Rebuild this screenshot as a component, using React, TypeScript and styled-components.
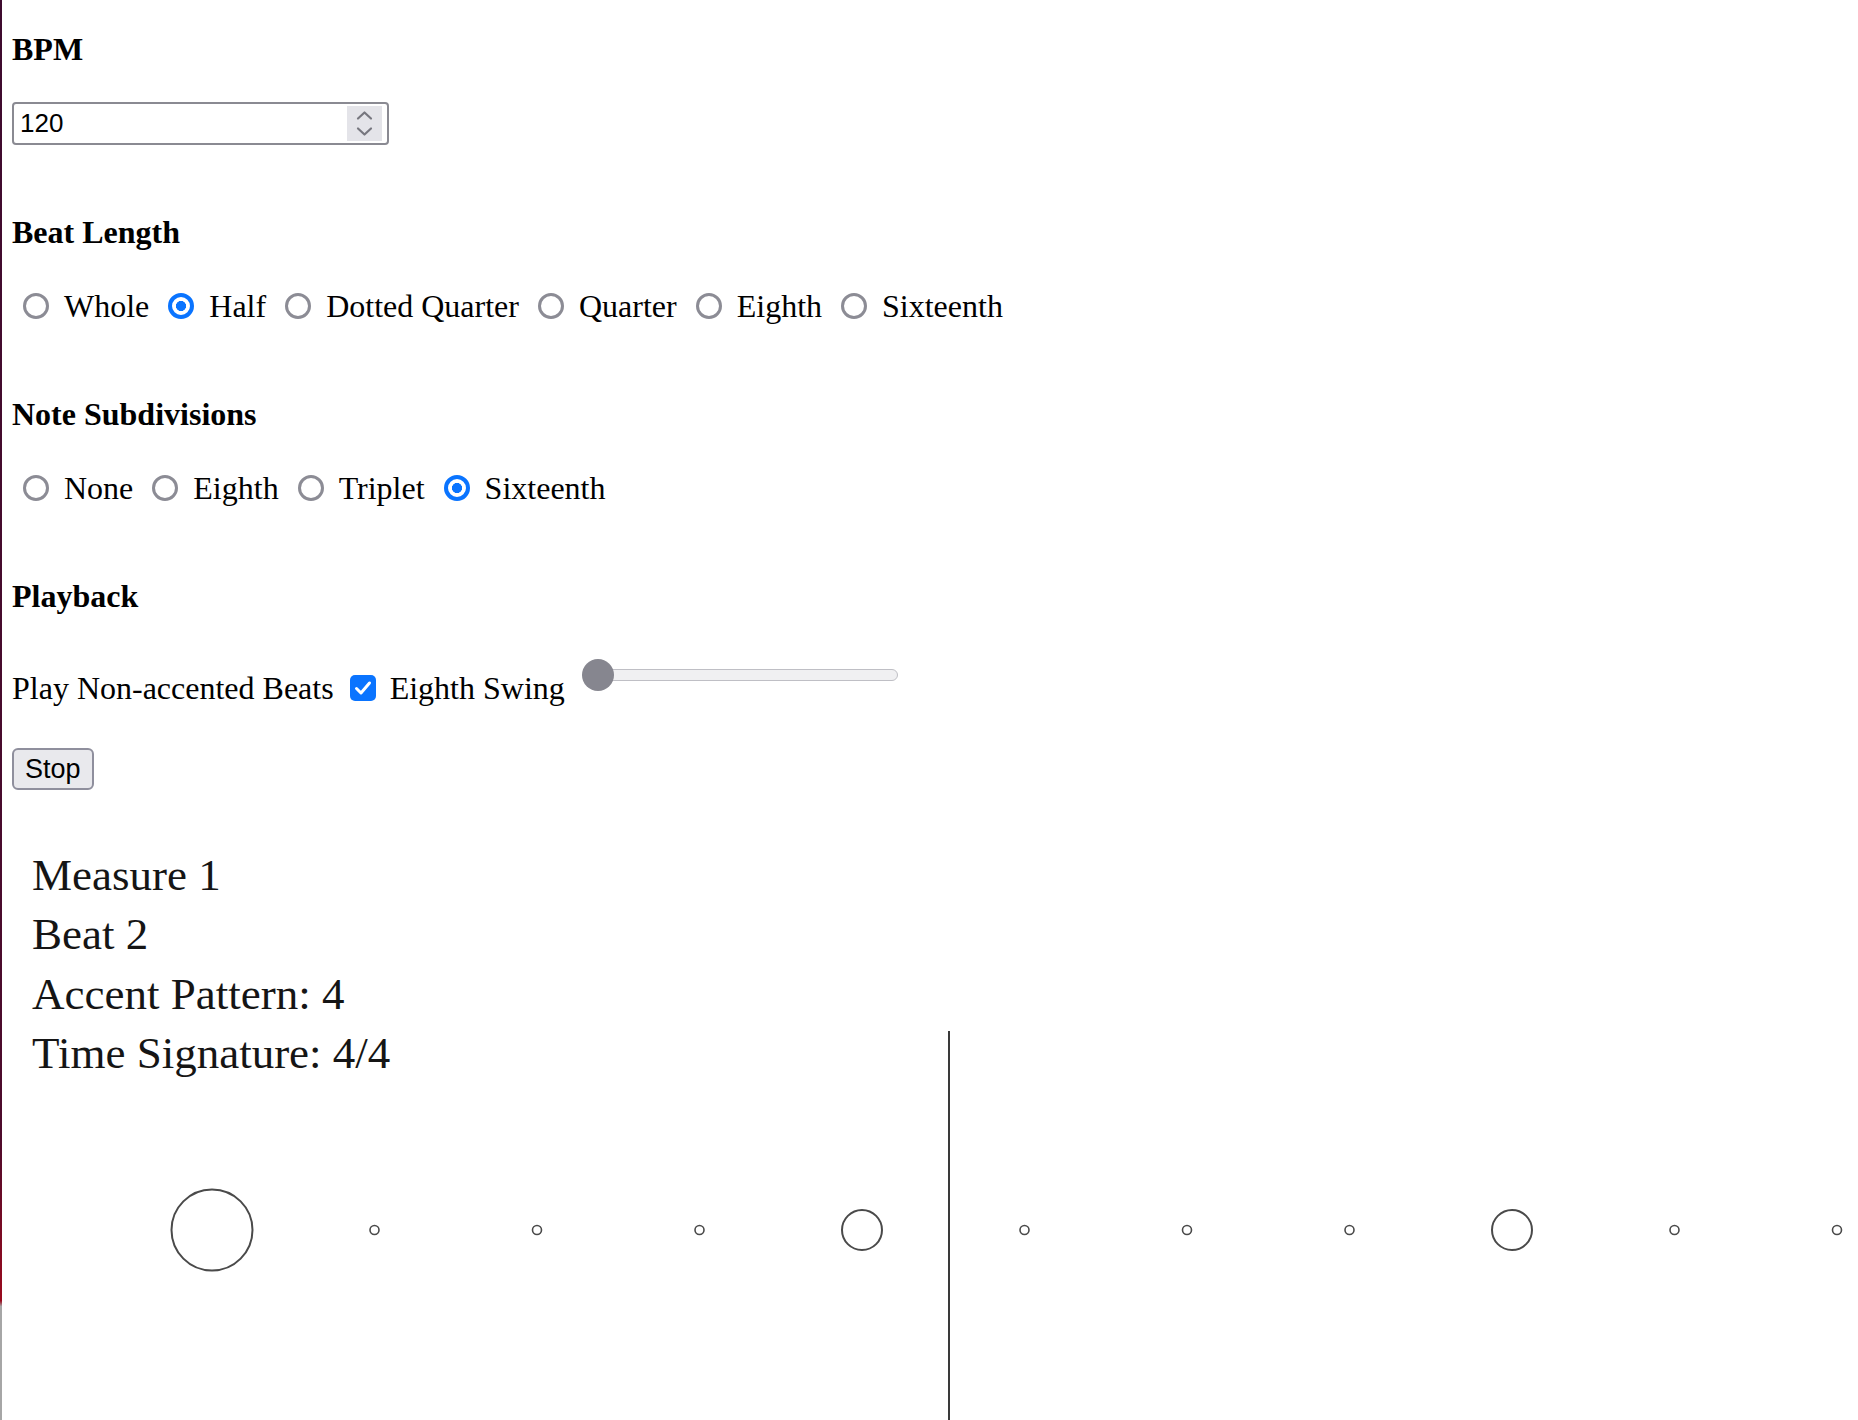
import React from "react";
import styled, { createGlobalStyle } from "styled-components";

const Global = createGlobalStyle`
  html {
    background: #fff linear-gradient(to bottom, #3e0b2f 0, #4d0b2c 80%, #9a0a1e 91.6%, #a6a6a6 92%, #a6a6a6 100%) no-repeat 0 0 / 2px 1420px;
    overflow: hidden;
  }
  body {
    margin: 0;
    overflow: hidden;
    font-family: "Liberation Serif", "Times New Roman", serif;
    color: #000;
  }
  * { box-sizing: border-box; }
`;

const Page = styled.div`
  padding: 31px 0 0 12px;
  display: flex;
  flex-direction: column;
  align-items: flex-start;
`;

const Heading = styled.h4<{ $mt: number }>`
  margin: ${(p) => p.$mt}px 0 0;
  font-size: 32px;
  line-height: 36px;
  font-weight: bold;
`;

const NumberBox = styled.div`
  margin-top: 35px;
  width: 377px;
  height: 43px;
  border: 2px solid #8a8a92;
  border-radius: 4px;
  display: flex;
  align-items: stretch;
  background: #fff;
`;

const NumberText = styled.input`
  flex: 1;
  min-width: 0;
  border: none;
  outline: none;
  background: transparent;
  padding: 0 0 0 6px;
  font-family: "Liberation Sans", Arial, sans-serif;
  font-size: 26px;
  color: #000;
`;

const Spinner = styled.div`
  width: 35px;
  margin: 2px 5px 2px 0;
  background: #e4e4e9;
  display: flex;
  align-items: center;
  justify-content: center;
`;

const Row = styled.div<{ $mt: number }>`
  margin-top: ${(p) => p.$mt}px;
  height: 36px;
  display: flex;
  align-items: center;
  gap: 8px;
  font-size: 32px;
  line-height: 36px;
`;

const Option = styled.label`
  display: flex;
  align-items: center;
  white-space: nowrap;
`;

const Radio = styled.input.attrs({ type: "radio" })`
  appearance: none;
  -webkit-appearance: none;
  flex: none;
  width: 26px;
  height: 26px;
  margin: 0 15px 0 11px;
  border-radius: 50%;
  border: 3px solid #8c8c95;
  background: #fff;
  &:checked {
    border: 4.5px solid #0a74ff;
    background: radial-gradient(circle, #0a74ff 0 4.8px, #fff 5.3px);
  }
`;

const PlainText = styled.span<{ $ml?: number }>`
  margin-left: ${(p) => p.$ml ?? 0}px;
  white-space: nowrap;
`;

const CheckBox = styled.span`
  flex: none;
  width: 26px;
  height: 26px;
  margin-left: 8px;
  border-radius: 5px;
  background: #0a74ff;
  display: inline-flex;
  align-items: center;
  justify-content: center;
`;

const Slider = styled.div`
  align-self: flex-start;
  margin: -11px 0 0 10px;
  width: 315px;
  height: 32px;
  display: flex;
  align-items: center;
`;

const Track = styled.div`
  margin-left: 16px;
  width: 299px;
  height: 12px;
  border: 1.5px solid #bfbfc5;
  border-radius: 6px;
  background: #f0f0f2;
  display: flex;
  align-items: center;
`;

const Thumb = styled.div`
  position: relative;
  margin-left: -17.5px;
  width: 32px;
  height: 32px;
  flex: none;
  border-radius: 50%;
  background: #86868f;
`;

const StopButton = styled.button`
  margin-top: 42px;
  height: 42px;
  padding: 0 11px;
  border: 2px solid #8f8f9d;
  border-radius: 6px;
  background: #e9e9ed;
  font-family: "Liberation Sans", Arial, sans-serif;
  font-size: 27px;
  color: #000;
`;

const Stage = styled.div`
  position: relative;
  margin-top: 10px;
  width: 1846px;
`;

const Canvas = styled.svg`
  display: block;
`;

const Info = styled.div`
  position: absolute;
  left: 20px;
  top: 46px;
  font-family: "Liberation Serif", Georgia, serif;
  font-size: 45px;
  line-height: 59.3px;
  color: #151515;
`;

const InfoLine = styled.div`
  white-space: nowrap;
`;

const beatLengths = ["Whole", "Half", "Dotted Quarter", "Quarter", "Eighth", "Sixteenth"];
const subdivisions = ["None", "Eighth", "Triplet", "Sixteenth"];

type Mark = { x: number; r: number };
const marks: Mark[] = Array.from({ length: 11 }, (_, i) => {
  const x = 200 + i * 162.5;
  const r = i === 0 ? 40.5 : i % 4 === 0 ? 20 : 4.5;
  return { x, r };
});

export default function App() {
  return (
    <>
      <Global />
      <Page>
        <Heading $mt={0}>BPM</Heading>
        <NumberBox>
          <NumberText defaultValue="120" />
          <Spinner>
            <svg width="35" height="35" viewBox="0 0 35 35">
              <polyline points="11,12.5 17.5,6.5 24,12.5" fill="none" stroke="#77777f" strokeWidth="2.2" strokeLinecap="round" strokeLinejoin="round" />
              <polyline points="11,22.5 17.5,28.5 24,22.5" fill="none" stroke="#77777f" strokeWidth="2.2" strokeLinecap="round" strokeLinejoin="round" />
            </svg>
          </Spinner>
        </NumberBox>

        <Heading $mt={69}>Beat Length</Heading>
        <Row $mt={38}>
          {beatLengths.map((b) => (
            <Option key={b}>
              <Radio name="beat" defaultChecked={b === "Half"} />
              {b}
            </Option>
          ))}
        </Row>

        <Heading $mt={72}>Note Subdivisions</Heading>
        <Row $mt={38}>
          {subdivisions.map((s) => (
            <Option key={s}>
              <Radio name="sub" defaultChecked={s === "Sixteenth"} />
              {s}
            </Option>
          ))}
        </Row>

        <Heading $mt={72}>Playback</Heading>
        <Row $mt={56}>
          <PlainText>Play Non-accented Beats</PlainText>
          <CheckBox>
            <svg width="26" height="26" viewBox="0 0 26 26">
              <polyline points="6.5,13.5 11,18 19.5,8" fill="none" stroke="#fff" strokeWidth="3" strokeLinecap="round" strokeLinejoin="round" />
            </svg>
          </CheckBox>
          <PlainText $ml={6}>Eighth Swing</PlainText>
          <Slider>
            <Track>
              <Thumb />
            </Track>
          </Slider>
        </Row>

        <StopButton>Stop</StopButton>

        <Stage>
          <Canvas width="1846" height="640" viewBox="0 0 1846 640">
            <line x1="937" y1="231" x2="937" y2="640" stroke="#3a3a3a" strokeWidth="2" />
            {marks.map((m, i) => (
              <circle
                key={i}
                cx={m.x}
                cy={430}
                r={m.r}
                fill="none"
                stroke="#4a4a4a"
                strokeWidth={m.r > 10 ? 2 : 1.6}
              />
            ))}
          </Canvas>
          <Info>
            <InfoLine>Measure 1</InfoLine>
            <InfoLine>Beat 2</InfoLine>
            <InfoLine>Accent Pattern: 4</InfoLine>
            <InfoLine>Time Signature: 4/4</InfoLine>
          </Info>
        </Stage>
      </Page>
    </>
  );
}
